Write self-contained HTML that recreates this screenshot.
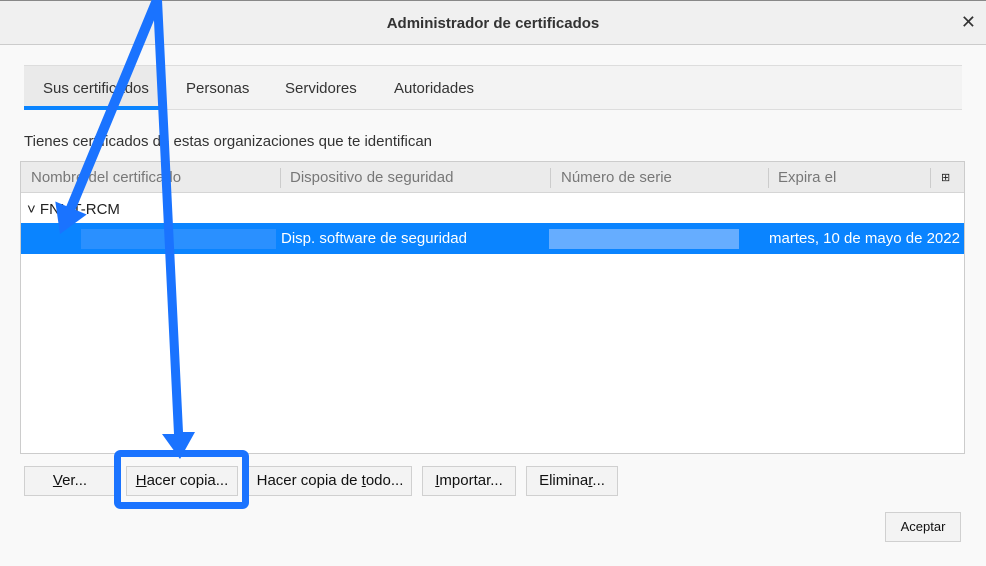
<!DOCTYPE html>
<html><head><meta charset="utf-8"><style>
*{box-sizing:border-box;margin:0;padding:0}
body{width:986px;height:566px;overflow:hidden;background:#f9f9f9;font-family:"Liberation Sans",sans-serif;font-size:14px;color:#222;position:relative}
.tb{position:absolute;left:0;top:0;width:986px;height:45px;background:#f0f0f0;border-bottom:1px solid #ccc;border-top:1px solid #888}
.tb .t{position:absolute;left:0;right:0;top:14px;text-align:center;font-weight:bold;font-size:15px;color:#333}
.tb .x{position:absolute;right:10px;top:11px;font-size:18px;color:#333}
.tabs{position:absolute;left:24px;top:65px;width:938px;height:45px;background:#f3f3f3;border-top:1px solid #ddd;border-bottom:1px solid #ddd}
.tab{position:absolute;top:14px;font-size:15px;color:#333}
.sel{position:absolute;left:0;top:0;width:141px;height:44px;background:#eaeaea;border-bottom:4px solid #0a84ff}
.desc{position:absolute;left:24px;top:133px;font-size:15px;color:#333}
.tbl{position:absolute;left:20px;top:161px;width:945px;height:293px;background:#fff;border:1px solid #ccc}
.hd{position:absolute;left:0;top:0;width:943px;height:31px;background:#ebebeb;border-bottom:1px solid #d5d5d5;color:#777;font-size:15px}
.hd span{position:absolute;top:7px}
.sep{position:absolute;top:6px;width:1px;height:20px;background:#ccc}
.row{position:absolute;left:0;top:61px;width:943px;height:31px;background:#0a84ff;color:#fff;font-size:15px}
.btn{position:absolute;top:466px;height:30px;background:#f3f3f3;border:1px solid #d0d0d0;font-size:15px;text-align:center;line-height:28px;color:#111}
</style></head><body>
<div class="tb"><div class="t">Administrador de certificados</div><div class="x">✕</div></div>
<div class="tabs"><div class="sel"></div>
<div class="tab" style="left:19px">Sus certificados</div>
<div class="tab" style="left:162px">Personas</div>
<div class="tab" style="left:261px">Servidores</div>
<div class="tab" style="left:370px">Autoridades</div></div>
<div class="desc">Tienes certificados de estas organizaciones que te identifican</div>
<div class="tbl">
<div class="hd"><span style="left:10px">Nombre del certificado</span><div class="sep" style="left:259px"></div><span style="left:269px">Dispositivo de seguridad</span><div class="sep" style="left:529px"></div><span style="left:540px">Número de serie</span><div class="sep" style="left:747px"></div><span style="left:757px">Expira el</span><div class="sep" style="left:909px"></div><span style="left:920px;font-size:11px;color:#222;top:9px">⊞</span></div>
<div style="position:absolute;left:6px;top:39px;font-size:15px;color:#222">˅ FNMT-RCM</div>
<div class="row">
<div style="position:absolute;left:60px;top:6px;width:195px;height:20px;background:#2a90ff"></div>
<div style="position:absolute;left:528px;top:6px;width:190px;height:20px;background:#7db8ff;opacity:.8"></div>
<span style="position:absolute;left:260px;top:7px">Disp. software de seguridad</span>
<span style="position:absolute;left:748px;top:7px">martes, 10 de mayo de 2022</span></div>
</div>
<div class="btn" style="left:24px;width:92px"><u>V</u>er...</div>
<div class="btn" style="left:126px;width:112px"><u>H</u>acer copia...</div>
<div class="btn" style="left:248px;width:164px">Hacer copia de <u>t</u>odo...</div>
<div class="btn" style="left:422px;width:94px"><u>I</u>mportar...</div>
<div class="btn" style="left:526px;width:92px">Elimina<u>r</u>...</div>
<div class="btn" style="left:885px;top:512px;width:76px;font-size:13px">Aceptar</div>
<svg style="position:absolute;left:0;top:0" width="986" height="566">
<g fill="#1a73ff">
<polygon points="152.4,-1.9 161.6,1.9 75.6,209.9 86.7,214.5 60,234 55.3,201.5 66.4,206.1"/>
<polygon points="153,0 162,0 183,432 195,432 180,459 162,434 174,434"/>
</g>
<rect x="117.5" y="453.5" width="128" height="52" rx="3" fill="none" stroke="#1a73ff" stroke-width="7"/>
</svg>
</body></html>
